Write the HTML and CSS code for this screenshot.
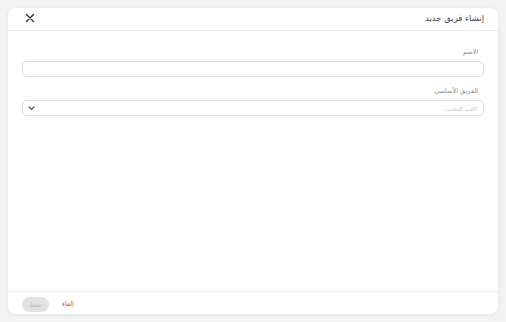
FILE: index.html
```html
<!DOCTYPE html>
<html lang="ar" dir="rtl">
<head>
<meta charset="utf-8">
<link rel="stylesheet" href="styles.css">
</head>
<body>
<div class="dialog">
  <div class="dialog-header">
    <div class="title">إنشاء فريق جديد</div>
    <button class="close" aria-label="close">
      <svg width="10" height="10" viewBox="0 0 10 10"><path d="M1.5 1.5L8.5 8.5M8.5 1.5L1.5 8.5" stroke="#333" stroke-width="1.4" stroke-linecap="round"/></svg>
    </button>
  </div>
  <div class="dialog-body">
    <div class="field">
      <label class="label">الاسم</label>
      <div class="input"></div>
    </div>
    <div class="field">
      <label class="label">الفريق الأساسي</label>
      <div class="input select">
        <span class="placeholder">اكتب للبحث...</span>
        <svg class="chev" width="7" height="5" viewBox="0 0 7 5"><path d="M1 1L3.5 3.5L6 1" stroke="#555" stroke-width="1.2" fill="none" stroke-linecap="round"/></svg>
      </div>
    </div>
  </div>
  <div class="dialog-footer">
    <button class="cancel">إلغاء</button>
    <button class="save">حفظ</button>
  </div>
</div>
</body>
</html>
```
FILE: styles.css
```css
* { box-sizing: border-box; }
html, body { margin: 0; height: 100%; }
body {
  background: #f3f3f3;
  padding: 8px;
  font-family: "DejaVu Sans", "Noto Sans", sans-serif;
}
.dialog {
  width: 490px;
  height: 306px;
  background: #fff;
  border-radius: 8px;
  box-shadow: 0 1px 4px rgba(0,0,0,0.08);
  display: flex;
  flex-direction: column;
}
.dialog-header {
  height: 23px;
  border-bottom: 1px solid #ececec;
  display: flex;
  align-items: center;
  justify-content: space-between;
  padding: 0 14px 3px 15px;
}
.title {
  font-size: 8.5px;
  color: #444;
}
.close {
  border: 0;
  background: none;
  padding: 0;
  width: 14px;
  height: 14px;
  display: flex;
  align-items: center;
  justify-content: center;
}
.dialog-body {
  flex: 1;
  padding: 16px 14px 0 14px;
  display: flex;
  flex-direction: column;
  gap: 9px;
}
.field { display: flex; flex-direction: column; }
.label {
  font-size: 6.5px;
  color: #8a8a8a;
  padding-right: 6px;
  height: 10px;
  line-height: 10px;
  margin-bottom: 4px;
}
.input {
  height: 16px;
  border: 1px solid #dcdcdc;
  border-radius: 5px;
  background: #fff;
}
.select {
  display: flex;
  align-items: center;
  justify-content: space-between;
  padding: 0 6px 0 5px;
}
.placeholder {
  font-size: 6px;
  color: #c4c4c4;
}
.chev { display: block; }
.dialog-footer {
  height: 23px;
  border-top: 1px solid #ececec;
  display: flex;
  align-items: center;
  justify-content: flex-end;
  padding: 2px 14px 0 14px;
  gap: 13px;
}
.save {
  border: 0;
  background: #e2e2e2;
  color: #b5b5b5;
  border-radius: 8px;
  width: 27px;
  height: 15px;
  font-family: inherit;
  font-size: 6px;
  padding: 0;
}
.cancel {
  border: 0;
  background: none;
  color: #e4473a;
  font-family: inherit;
  font-size: 6.5px;
  padding: 0;
}
```
